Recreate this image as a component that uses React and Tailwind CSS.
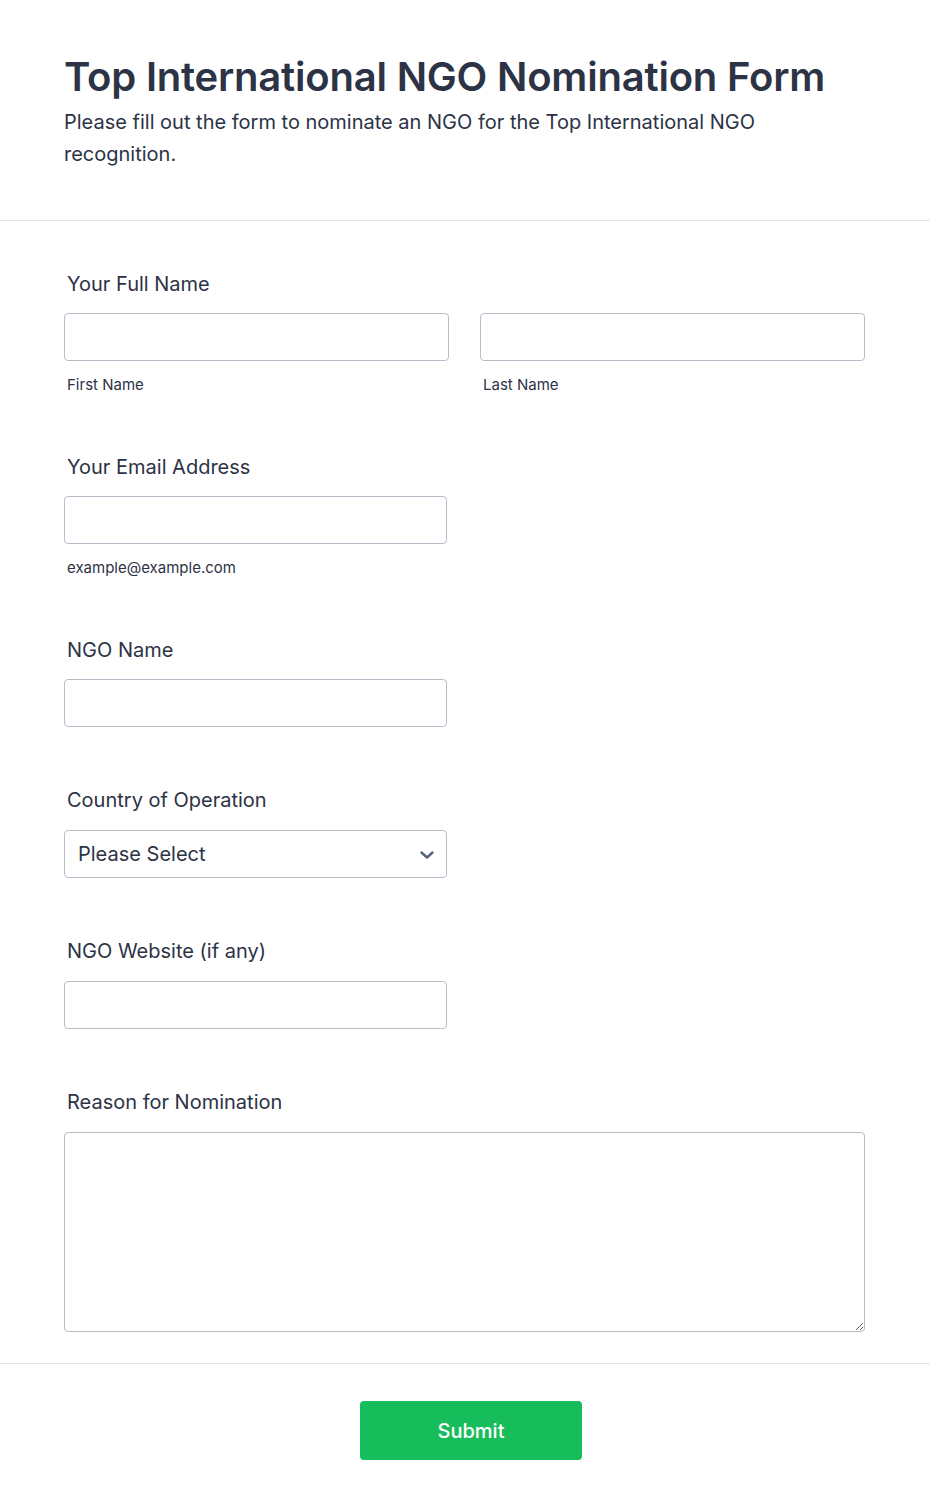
import React from 'react';

const font = { fontFamily: 'Inter, "Noto Sans", sans-serif' };

function Label({ children }) {
  return (
    <label className="block pl-[3px] text-[20px] leading-[28px] text-[#2c3345]">
      {children}
    </label>
  );
}

function SubLabel({ children }) {
  return <div className="pl-[3px] mt-[14px] text-[15px] leading-[20px] text-[#2c3345]">{children}</div>;
}

const inputCls =
  'block h-[48px] rounded-[4px] border border-[#b8bdc9] bg-white px-[13px] text-[18px] text-[#2c3345] outline-none';

export default function App() {
  return (
    <div className="min-h-[1510px] bg-white" style={font}>
      <div className="px-[64px] pt-[53px] pb-[50px] border-b border-[#e3e5ea]">
        <h1 className="text-[40px] leading-[48px] font-semibold text-[#2c3345] tracking-[-0.2px]">
          Top International NGO Nomination Form
        </h1>
        <p className="mt-[5px] text-[20px] leading-[32px] text-[#2c3345] max-w-[720px]">
          Please fill out the form to nominate an NGO for the Top International NGO recognition.
        </p>
      </div>

      <div className="px-[64px] pt-[49px] pb-[31px] flex flex-col border-b border-[#e3e5ea]">
        <div>
          <Label>Your Full Name</Label>
          <div className="mt-[15px] flex gap-[31px] w-[801px]">
            <div className="w-[385px]">
              <input className={inputCls + ' w-full'} />
              <SubLabel>First Name</SubLabel>
            </div>
            <div className="w-[385px]">
              <input className={inputCls + ' w-full'} />
              <SubLabel>Last Name</SubLabel>
            </div>
          </div>
        </div>

        <div className="mt-[58px]">
          <Label>Your Email Address</Label>
          <input className={inputCls + ' mt-[15px] w-[383px]'} />
          <SubLabel>example@example.com</SubLabel>
        </div>

        <div className="mt-[58px]">
          <Label>NGO Name</Label>
          <input className={inputCls + ' mt-[15px] w-[383px]'} />
        </div>

        <div className="mt-[59px]">
          <Label>Country of Operation</Label>
          <div className="relative mt-[16px] w-[383px]">
            <div className={inputCls + ' w-full flex items-center text-[20px] pl-[13px]'}>Please Select</div>
            <svg
              className="absolute right-[13px] top-[21px]"
              width="14"
              height="8"
              viewBox="0 0 14 8"
              fill="none"
              stroke="#57647e"
              strokeWidth="2.4"
              strokeLinecap="round"
              strokeLinejoin="round"
            >
              <path d="M1.5 1.5L7 6.5L12.5 1.5" />
            </svg>
          </div>
        </div>

        <div className="mt-[59px]">
          <Label>NGO Website (if any)</Label>
          <input className={inputCls + ' mt-[16px] w-[383px]'} />
        </div>

        <div className="mt-[59px]">
          <Label>Reason for Nomination</Label>
          <textarea className="mt-[16px] block w-[801px] h-[200px] rounded-[4px] border border-[#b8bdc9] bg-white p-[13px] text-[18px] outline-none resize-y" />
        </div>
      </div>

      <div className="flex justify-center pt-[37px] pb-[50px]">
        <button className="ml-[12px] w-[222px] h-[59px] rounded-[4px] bg-[#18bd5b] text-white text-[20px] font-medium">
          Submit
        </button>
      </div>
    </div>
  );
}
